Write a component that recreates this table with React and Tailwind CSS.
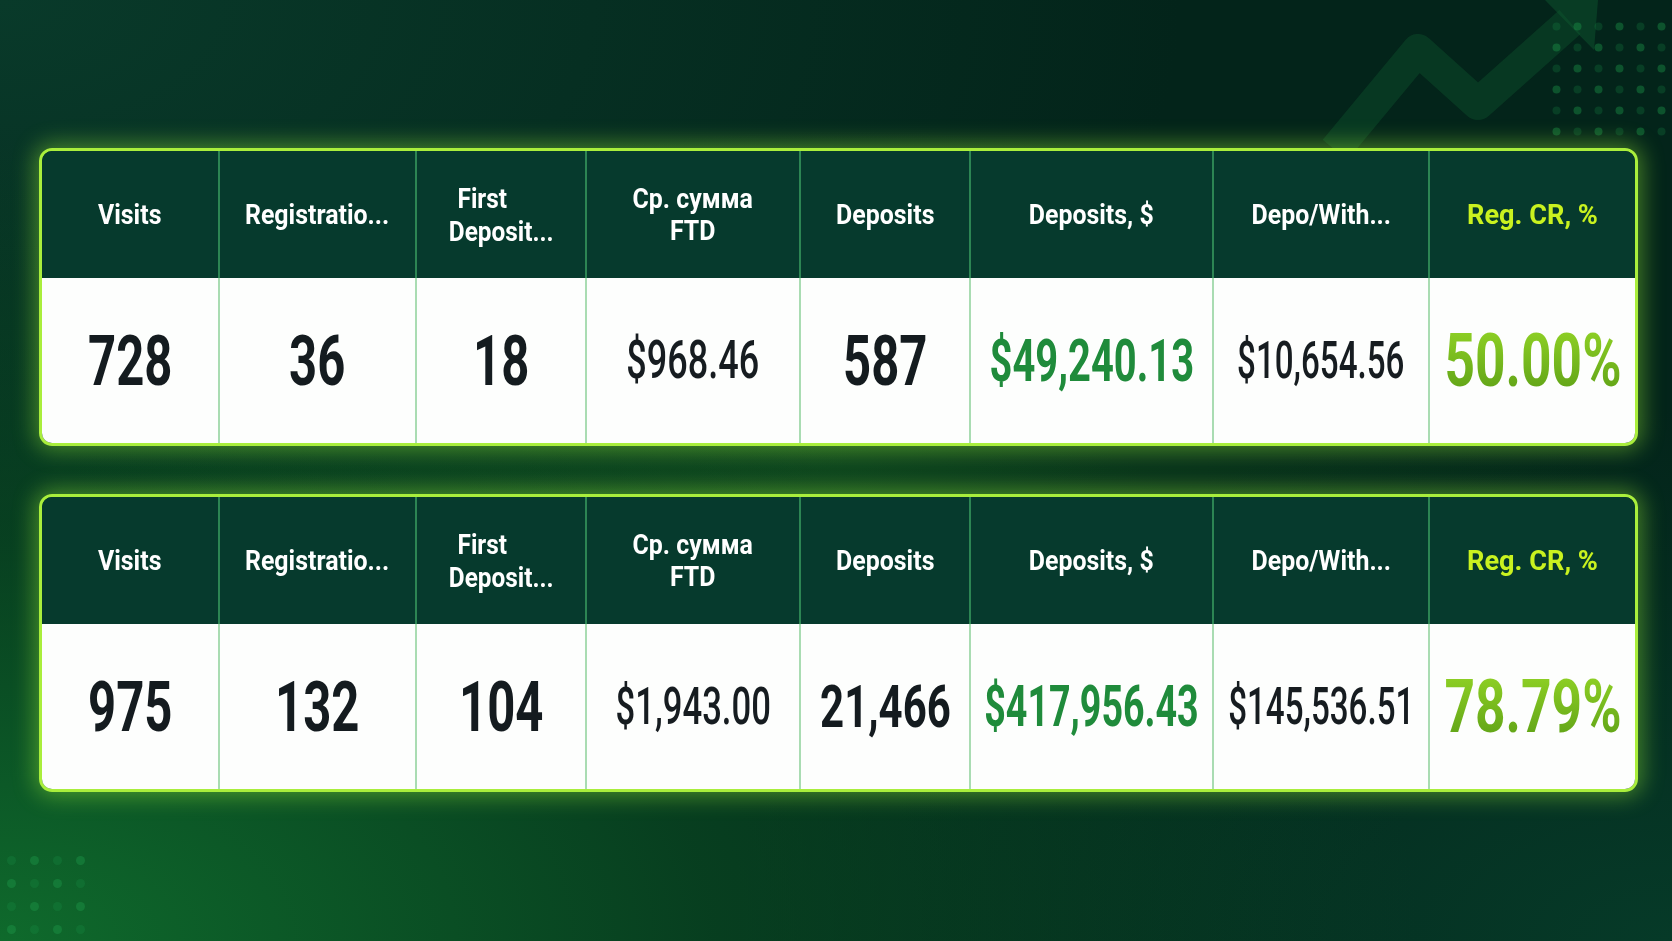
import React from "react";

const headers = [
  { label: "Visits" },
  { label: "Registratio..." },
  { label: "First\nDeposit...", split: true },
  { label: "Ср. сумма\nFTD" },
  { label: "Deposits" },
  { label: "Deposits, $" },
  { label: "Depo/With..." },
  { label: "Reg. CR, %", accent: true },
];

const big = "text-[70px] font-bold text-[#141b1f] scale-x-[0.7]";

const tables = [
  [
    { v: "728", cls: big },
    { v: "36", cls: big },
    { v: "18", cls: big },
    { v: "$968.46", cls: "text-[53px] font-medium text-[#161c20] scale-x-[0.68]" },
    { v: "587", cls: big },
    { v: "$49,240.13", cls: "text-[60px] font-bold text-[#1f8b3b] scale-x-[0.665]" },
    { v: "$10,654.56", cls: "text-[51px] font-medium text-[#161c20] scale-x-[0.65]" },
    { v: "50.00%", lime: true },
  ],
  [
    { v: "975", cls: big },
    { v: "132", cls: big },
    { v: "104", cls: big },
    { v: "$1,943.00", cls: "text-[51px] font-medium text-[#161c20] scale-x-[0.68]" },
    { v: "21,466", cls: "text-[60px] font-bold text-[#141b1f] scale-x-[0.7]" },
    { v: "$417,956.43", cls: "text-[57px] font-bold text-[#1f8b3b] scale-x-[0.66]" },
    { v: "$145,536.51", cls: "text-[51px] font-medium text-[#161c20] scale-x-[0.65]" },
    { v: "78.79%", lime: true },
  ],
];

const Dots = ({ cols, rows, gap, r, className }) => (
  <svg className={className} width={cols * gap} height={rows * gap}>
    {Array.from({ length: rows }).map((_, y) =>
      Array.from({ length: cols }).map((_, x) => (
        <circle
          key={`${x}-${y}`}
          cx={x * gap + gap / 2}
          cy={y * gap + gap / 2}
          r={r}
          fill="#1d9a4c"
          opacity={0.22 + 0.18 * ((x + y) % 2)}
        />
      ))
    )}
  </svg>
);

const StatTable = ({ values }) => (
  <div className="rounded-[13px] border-[3px] border-[#a9ee3c] shadow-[0_0_22px_4px_rgba(150,235,50,0.45)] overflow-hidden">
    <div className="grid grid-cols-[176px_197px_170px_214px_170px_243px_216px_minmax(0,1fr)]">
      {headers.map((h, i) => (
        <div
          key={h.label}
          className={`h-[127px] bg-[#063a2d] flex items-center justify-center ${
            i > 0 ? "border-l-2 border-[#2c8553]" : ""
          }`}
        >
          {h.split ? (
            <div className="inline-block scale-x-[0.87] text-left text-[28px] leading-[33px] font-bold text-white">
              <div className="pl-[10px]">First</div>
              <div>Deposit...</div>
            </div>
          ) : (
            <div
              className={`inline-block text-center text-[28px] leading-[32px] font-bold whitespace-pre-line ${
                h.accent ? "text-[#c9f21f] scale-x-[0.97]" : "text-white scale-x-[0.89]"
              }`}
            >
              {h.label}
            </div>
          )}
        </div>
      ))}
      {values.map((c, i) => (
        <div
          key={i}
          className={`h-[165px] bg-[#fdfefd] flex items-center justify-center ${
            i > 0 ? "border-l-2 border-[#a9dcb2]" : ""
          }`}
        >
          {c.lime ? (
            <span className="inline-block scale-x-[0.72] text-[74px] font-bold leading-none whitespace-nowrap bg-gradient-to-b from-[#92d426] to-[#5c9f16] bg-clip-text text-transparent">
              {c.v}
            </span>
          ) : (
            <span className={`inline-block leading-none whitespace-nowrap ${c.cls}`}>{c.v}</span>
          )}
        </div>
      ))}
    </div>
  </div>
);

export default function App() {
  return (
    <div className="relative w-[1672px] h-[941px] overflow-hidden bg-[#03241a] font-['Roboto',sans-serif]">
      {/* background light */}
      <div className="absolute inset-0 bg-[radial-gradient(ellipse_at_0%_100%,#0f6a2c_0%,rgba(10,80,35,0.6)_30%,transparent_60%),radial-gradient(ellipse_at_0%_0%,#093a2a_0%,transparent_50%),radial-gradient(ellipse_at_100%_100%,#063a28_0%,transparent_40%)]" />
      <div className="absolute left-0 right-0 top-[100px] h-[720px] bg-[radial-gradient(ellipse_at_50%_50%,rgba(40,140,40,0.26)_0%,transparent_65%)]" />

      {/* trend arrow */}
      <svg className="absolute left-0 top-0" width="1672" height="200">
        <polyline
          points="1335,150 1418,50 1478,104 1570,22"
          fill="none"
          stroke="#0f5a30"
          strokeOpacity="0.38"
          strokeWidth="32"
          strokeLinejoin="round"
        />
        <polygon points="1545,0 1598,0 1594,50" fill="#0f5a30" fillOpacity="0.45" />
      </svg>
      <Dots className="absolute right-0 top-[16px]" cols={6} rows={6} gap={21} r={4} />
      <Dots className="absolute left-0 bottom-0" cols={4} rows={4} gap={23} r={4.5} />

      <div className="relative flex flex-col gap-[48px] pt-[148px] pl-[39px] w-[1638px]">
        {tables.map((t, i) => (
          <StatTable key={i} values={t} />
        ))}
      </div>
    </div>
  );
}
